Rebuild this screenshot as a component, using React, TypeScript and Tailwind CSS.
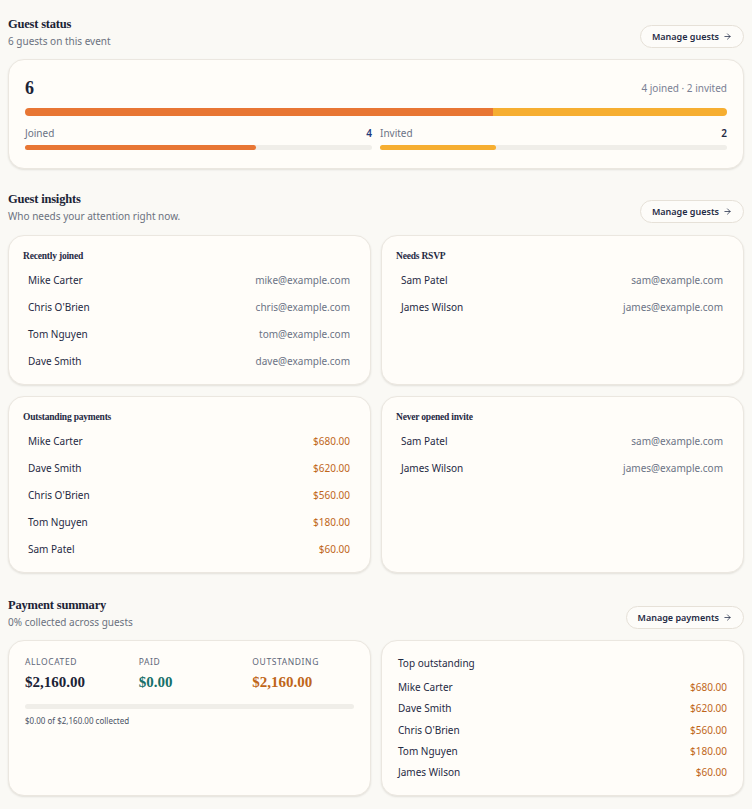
import { ArrowRight } from "lucide-react";

const serif = "font-['Liberation_Serif',serif]";

const recentlyJoined = [
  { name: "Mike Carter", value: "mike@example.com" },
  { name: "Chris O'Brien", value: "chris@example.com" },
  { name: "Tom Nguyen", value: "tom@example.com" },
  { name: "Dave Smith", value: "dave@example.com" },
];

const needsRsvp = [
  { name: "Sam Patel", value: "sam@example.com" },
  { name: "James Wilson", value: "james@example.com" },
];

const outstanding = [
  { name: "Mike Carter", value: "$680.00" },
  { name: "Dave Smith", value: "$620.00" },
  { name: "Chris O'Brien", value: "$560.00" },
  { name: "Tom Nguyen", value: "$180.00" },
  { name: "Sam Patel", value: "$60.00" },
];

const topOutstanding = [
  { name: "Mike Carter", value: "$680.00" },
  { name: "Dave Smith", value: "$620.00" },
  { name: "Chris O'Brien", value: "$560.00" },
  { name: "Tom Nguyen", value: "$180.00" },
  { name: "James Wilson", value: "$60.00" },
];

function SectionHeader({ title, sub, action }: { title: string; sub: string; action: string }) {
  return (
    <div className="flex items-end justify-between">
      <div>
        <h2 className={`${serif} text-[12.5px] font-bold leading-5 text-[#1b2336] tracking-[-0.2px]`}>{title}</h2>
        <p className="text-[10px] leading-[14px] text-[#6b7280]">{sub}</p>
      </div>
      <button className="flex h-[23px] items-center gap-1 rounded-full border border-[#e6e1d8] bg-[#fdfcf9] px-[11px] text-[9px] font-semibold text-[#1f2a44]">
        {action}
        <ArrowRight size={9} strokeWidth={2} />
      </button>
    </div>
  );
}

function Card({ className = "", children }: { className?: string; children: React.ReactNode }) {
  return (
    <div
      className={`rounded-[16px] border border-[#ebe7e0] bg-[#fffdf9] shadow-[0_1px_2px_rgba(60,50,30,0.12)] ${className}`}
    >
      {children}
    </div>
  );
}

function ListCard({
  title,
  rows,
  amount,
}: {
  title: string;
  rows: { name: string; value: string }[];
  amount?: boolean;
}) {
  return (
    <Card className="pl-[14px] pr-[20px] pt-[12px] pb-[9px]">
      <h3 className={`${serif} text-[9.5px] font-bold leading-4 text-[#1f2a44] tracking-[-0.2px]`}>{title}</h3>
      <div className="mt-[3px] flex flex-col">
        {rows.map((r) => (
          <div key={r.name} className="flex h-[27px] items-center justify-between pl-[5px]">
            <span className="text-[10px] text-[#1f2a44]">{r.name}</span>
            <span className={`text-[10px] ${amount ? "text-[#c0661a]" : "text-[#6b7385]"}`}>{r.value}</span>
          </div>
        ))}
      </div>
    </Card>
  );
}

export default function App() {
  return (
    <div className="min-h-[809px] bg-[#faf9f5] px-2 pt-[14px] pb-3 font-['Noto_Sans',sans-serif]">
      {/* Guest status */}
      <SectionHeader title="Guest status" sub="6 guests on this event" action="Manage guests" />
      <Card className="mt-[11px] px-4 pt-[16px] pb-[18px]">
        <div className="flex items-center justify-between">
          <span className={`${serif} text-[18px] font-bold leading-6 text-[#1b2336]`}>6</span>
          <span className="text-[10px] text-[#7a8094]">4 joined · 2 invited</span>
        </div>
        <div className="mt-[8px] flex h-2 overflow-hidden rounded-full">
          <div className="h-full bg-[#e87634]" style={{ width: "66.67%" }} />
          <div className="h-full flex-1 bg-[#f6ae31]" />
        </div>
        <div className="mt-[9px] grid grid-cols-2 gap-2">
          <div>
            <div className="flex items-center justify-between text-[10px] leading-4">
              <span className="text-[#6b7385]">Joined</span>
              <span className="font-semibold text-[#1f3a7a]">4</span>
            </div>
            <div className="mt-[4px] h-[5px] rounded-full bg-[#f0eee9]">
              <div className="h-full rounded-full bg-[#e87634]" style={{ width: "66.67%" }} />
            </div>
          </div>
          <div>
            <div className="flex items-center justify-between text-[10px] leading-4">
              <span className="text-[#6b7385]">Invited</span>
              <span className="font-semibold text-[#1f2a44]">2</span>
            </div>
            <div className="mt-[4px] h-[5px] rounded-full bg-[#f0eee9]">
              <div className="h-full rounded-full bg-[#f6ae31]" style={{ width: "33.33%" }} />
            </div>
          </div>
        </div>
      </Card>

      {/* Guest insights */}
      <div className="mt-[20px]">
        <SectionHeader title="Guest insights" sub="Who needs your attention right now." action="Manage guests" />
      </div>
      <div className="mt-[12px] grid grid-cols-2 gap-x-[10px] gap-y-[11px]">
        <ListCard title="Recently joined" rows={recentlyJoined} />
        <ListCard title="Needs RSVP" rows={needsRsvp} />
        <ListCard title="Outstanding payments" rows={outstanding} amount />
        <ListCard title="Never opened invite" rows={needsRsvp} />
      </div>

      {/* Payment summary */}
      <div className="mt-[22px]">
        <SectionHeader title="Payment summary" sub="0% collected across guests" action="Manage payments" />
      </div>
      <div className="mt-[11px] grid grid-cols-2 gap-[10px]">
        <Card className="px-4 pt-[15px] pb-[16px]">
          <div className="grid grid-cols-3 gap-3">
            <div>
              <div className="text-[8.5px] tracking-[0.6px] text-[#5e6678]">ALLOCATED</div>
              <div className={`${serif} mt-[2px] text-[15px] font-bold text-[#1b2336]`}>$2,160.00</div>
            </div>
            <div>
              <div className="text-[8.5px] tracking-[0.6px] text-[#5e6678]">PAID</div>
              <div className={`${serif} mt-[2px] text-[15px] font-bold text-[#17706a]`}>$0.00</div>
            </div>
            <div>
              <div className="text-[8.5px] tracking-[0.6px] text-[#5e6678]">OUTSTANDING</div>
              <div className={`${serif} mt-[2px] text-[15px] font-bold text-[#c0661a]`}>$2,160.00</div>
            </div>
          </div>
          <div className="mt-[11px] h-[5px] rounded-full bg-[#f0eee9]" />
          <div className="mt-[6px] text-[8px] text-[#4b5366]">$0.00 of $2,160.00 collected</div>
        </Card>
        <Card className="px-4 pt-[14px] pb-[12px]">
          <div className="text-[10px] leading-4 text-[#1f2a44]">Top outstanding</div>
          <div className="mt-[6px] flex flex-col">
            {topOutstanding.map((r) => (
              <div key={r.name} className="flex h-[21.3px] items-center justify-between">
                <span className="text-[10px] text-[#1f2a44]">{r.name}</span>
                <span className="text-[10px] text-[#c0661a]">{r.value}</span>
              </div>
            ))}
          </div>
        </Card>
      </div>
    </div>
  );
}
